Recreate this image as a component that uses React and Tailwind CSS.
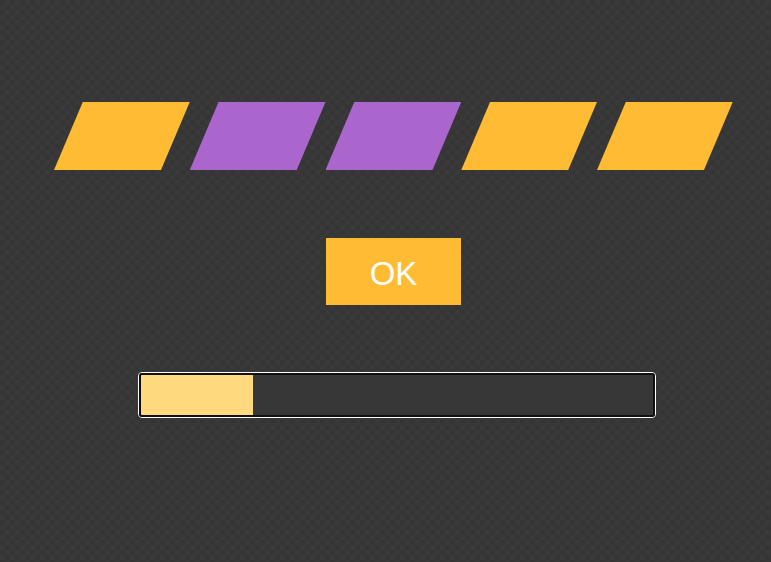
import React from "react";

const colors = ["#ffbb33", "#aa66cc", "#aa66cc", "#ffbb33", "#ffbb33"];

export default function App() {
  return (
    <div
      className="w-[771px] h-[562px] bg-[#373737] bg-[conic-gradient(#393939_25%,#353535_0_50%,#393939_0_75%,#353535_0)] bg-[length:10px_10px] flex flex-col"
      style={{ fontFamily: '"Liberation Sans", Arial, sans-serif' }}
    >
      <div className="flex pl-[54px] pt-[102px]">
        {colors.map((c, i) => (
          <div
            key={i}
            className="w-[135.75px] h-[68px] [clip-path:polygon(21.2%_0,100%_0,78.8%_100%,0_100%)]"
            style={{ backgroundColor: c }}
          />
        ))}
      </div>
      <div className="flex pl-[326px] pt-[68px]">
        <div className="w-[135px] h-[67px] bg-[#ffbb33] flex items-center justify-center text-white text-[33px] leading-none pt-[4px]">
          OK
        </div>
      </div>
      <div className="flex pl-[138px] pt-[67px]">
        <div className="w-[518px] h-[46px] border border-white rounded-[4px] p-0">
          <div className="w-full h-full border-2 border-[#111111] rounded-[3px] bg-[#373737] overflow-hidden">
            <div className="w-[112px] h-full bg-[#ffd97d]" />
          </div>
        </div>
      </div>
    </div>
  );
}
